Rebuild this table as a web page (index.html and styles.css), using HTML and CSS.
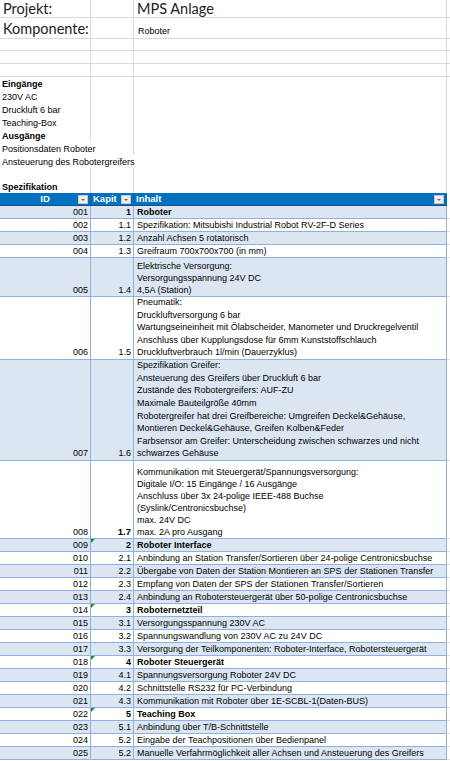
FILE: index.html
```html
<!DOCTYPE html>
<html lang="de">
<head>
<meta charset="utf-8">
<link rel="stylesheet" href="styles.css">
<title>Roboter</title>
</head>
<body>
<div class="sheet">
  <div class="row grid h18"><div class="cell big">Projekt:</div><div class="cell"></div><div class="cell big">MPS Anlage</div><div class="cell last"></div></div>
  <div class="row grid h21"><div class="cell big">Komponente:</div><div class="cell"></div><div class="cell komp">Roboter</div><div class="cell last"></div></div>
  <div class="row grid h12"><div class="cell"></div><div class="cell"></div><div class="cell"></div><div class="cell last"></div></div>
  <div class="row grid"><div class="cell"></div><div class="cell"></div><div class="cell"></div><div class="cell last"></div></div>
  <div class="row grid"><div class="cell"></div><div class="cell"></div><div class="cell"></div><div class="cell last"></div></div>

  <div class="row plain"><div class="cell b">Eingänge</div><div class="cell"></div><div class="cell"></div><div class="cell last"></div></div>
  <div class="row plain"><div class="cell">230V AC</div><div class="cell"></div><div class="cell"></div><div class="cell last"></div></div>
  <div class="row plain"><div class="cell">Druckluft 6 bar</div><div class="cell"></div><div class="cell"></div><div class="cell last"></div></div>
  <div class="row plain"><div class="cell">Teaching-Box</div><div class="cell"></div><div class="cell"></div><div class="cell last"></div></div>
  <div class="row plain"><div class="cell b">Ausgänge</div><div class="cell"></div><div class="cell"></div><div class="cell last"></div></div>
  <div class="row plain"><div class="cell span2">Positionsdaten Roboter</div><div class="cell"></div><div class="cell last"></div></div>
  <div class="row plain"><div class="cell span3">Ansteuerung des Robotergreifers</div><div class="cell last"></div></div>
  <div class="row plain"><div class="cell"></div><div class="cell"></div><div class="cell"></div><div class="cell last"></div></div>
  <div class="row plain h12"><div class="cell b">Spezifikation</div><div class="cell"></div><div class="cell"></div><div class="cell last"></div></div>

  <div class="row hdr">
    <div class="cell hc center">ID<span class="dd"></span></div>
    <div class="cell hc">Kapit<span class="dd"></span></div>
    <div class="cell hc">Inhalt<span class="dd"></span></div>
    <div class="cell last"></div>
  </div>

  <div class="row t band"><div class="cell num">001</div><div class="cell num b">1</div><div class="cell b">Roboter</div><div class="cell last"></div></div>
  <div class="row t"><div class="cell num">002</div><div class="cell num">1.1</div><div class="cell">Spezifikation: Mitsubishi Industrial Robot RV-2F-D Series</div><div class="cell last"></div></div>
  <div class="row t band"><div class="cell num">003</div><div class="cell num">1.2</div><div class="cell">Anzahl Achsen 5 rotatorisch</div><div class="cell last"></div></div>
  <div class="row t"><div class="cell num">004</div><div class="cell num">1.3</div><div class="cell">Greifraum 700x700x700 (in mm)</div><div class="cell last"></div></div>
  <div class="row t band h39"><div class="cell num">005</div><div class="cell num">1.4</div><div class="cell">Elektrische Versorgung:<br>Versorgungsspannung 24V DC<br>4,5A (Station)</div><div class="cell last"></div></div>
  <div class="row t h63 tight"><div class="cell num">006</div><div class="cell num">1.5</div><div class="cell">Pneumatik:<br>Druckluftversorgung 6 bar<br>Wartungseineinheit mit Ölabscheider, Manometer und Druckregelventil<br>Anschluss über Kupplungsdose für 6mm Kunststoffschlauch<br>Druckluftverbrauch 1l/min (Dauerzyklus)</div><div class="cell last"></div></div>
  <div class="row t band h101 tight"><div class="cell num">007</div><div class="cell num">1.6</div><div class="cell">Spezifikation Greifer:<br>Ansteuerung des Greifers über Druckluft 6 bar<br>Zustände des Robotergreifers: AUF-ZU<br>Maximale Bauteilgröße 40mm<br>Robotergreifer hat drei Greifbereiche: Umgreifen Deckel&amp;Gehäuse,<br>Montieren Deckel&amp;Gehäuse, Greifen Kolben&amp;Feder<br>Farbsensor am Greifer: Unterscheidung zwischen schwarzes und nicht<br>schwarzes Gehäuse</div><div class="cell last"></div></div>
  <div class="row t h78"><div class="cell num">008</div><div class="cell num b big7">1.7</div><div class="cell">Kommunikation mit Steuergerät/Spannungsversorgung:<br>Digitale I/O: 15 Eingänge / 16 Ausgänge<br>Anschluss über 3x 24-polige IEEE-488 Buchse<br>(Syslink/Centronicsbuchse)<br>max. 24V DC<br>max. 2A pro Ausgang</div><div class="cell last"></div></div>
  <div class="row t band"><div class="cell num">009</div><div class="cell num b mark">2</div><div class="cell b">Roboter Interface</div><div class="cell last"></div></div>
  <div class="row t"><div class="cell num">010</div><div class="cell num">2.1</div><div class="cell">Anbindung an Station Transfer/Sortieren über 24-polige Centronicsbuchse</div><div class="cell last"></div></div>
  <div class="row t band"><div class="cell num">011</div><div class="cell num">2.2</div><div class="cell">Übergabe von Daten der Station Montieren an SPS der Stationen Transfer</div><div class="cell last"></div></div>
  <div class="row t"><div class="cell num">012</div><div class="cell num">2.3</div><div class="cell">Empfang von Daten der SPS der Stationen Transfer/Sortieren</div><div class="cell last"></div></div>
  <div class="row t band"><div class="cell num">013</div><div class="cell num">2.4</div><div class="cell">Anbindung an Robotersteuergerät über 50-polige Centronicsbuchse</div><div class="cell last"></div></div>
  <div class="row t"><div class="cell num">014</div><div class="cell num b mark">3</div><div class="cell b">Roboternetzteil</div><div class="cell last"></div></div>
  <div class="row t band"><div class="cell num">015</div><div class="cell num">3.1</div><div class="cell">Versorgungsspannung 230V AC</div><div class="cell last"></div></div>
  <div class="row t"><div class="cell num">016</div><div class="cell num">3.2</div><div class="cell">Spannungswandlung von 230V AC zu 24V DC</div><div class="cell last"></div></div>
  <div class="row t band"><div class="cell num">017</div><div class="cell num">3.3</div><div class="cell">Versorgung der Teilkomponenten: Roboter-Interface, Robotersteuergerät</div><div class="cell last"></div></div>
  <div class="row t"><div class="cell num">018</div><div class="cell num b mark">4</div><div class="cell b">Roboter Steuergerät</div><div class="cell last"></div></div>
  <div class="row t band"><div class="cell num">019</div><div class="cell num">4.1</div><div class="cell">Spannungsversorgung Roboter 24V DC</div><div class="cell last"></div></div>
  <div class="row t"><div class="cell num">020</div><div class="cell num">4.2</div><div class="cell">Schnittstelle RS232 für PC-Verbindung</div><div class="cell last"></div></div>
  <div class="row t band"><div class="cell num">021</div><div class="cell num">4.3</div><div class="cell">Kommunikation mit Roboter über 1E-SCBL-1(Daten-BUS)</div><div class="cell last"></div></div>
  <div class="row t"><div class="cell num">022</div><div class="cell num b mark">5</div><div class="cell b">Teaching Box</div><div class="cell last"></div></div>
  <div class="row t band"><div class="cell num">023</div><div class="cell num">5.1</div><div class="cell">Anbindung über T/B-Schnittstelle</div><div class="cell last"></div></div>
  <div class="row t"><div class="cell num">024</div><div class="cell num">5.2</div><div class="cell">Eingabe der Teachpositionen über Bedienpanel</div><div class="cell last"></div></div>
  <div class="row t band"><div class="cell num">025</div><div class="cell num">5.2</div><div class="cell">Manuelle Verfahrmöglichkeit aller Achsen und Ansteuerung des Greifers</div><div class="cell last"></div></div>
</div>
</body>
</html>
```
FILE: styles.css
```css
* { box-sizing: border-box; margin: 0; padding: 0; }
html, body { background: #fff; }
body {
  width: 450px;
  height: 761px;
  overflow: hidden;
  font-family: "Liberation Sans", Arial, sans-serif;
  font-size: 9px;
  color: #000;
}
.sheet { display: flex; flex-direction: column; }
.row {
  display: grid;
  grid-template-columns: 91px 43px 313px 3px;
  height: 13px;
}
.h12 { height: 12px; }
.h18 { height: 18px; }
.h21 { height: 21px; }
.h39 { height: 39px; }
.h63 { height: 63px; }
.h78 { height: 78px; }
.h101 { height: 101px; }

.cell {
  border-right: 1px solid #dadada;
  overflow: hidden;
  white-space: nowrap;
  display: flex;
  flex-direction: column;
  justify-content: flex-end;
  padding: 0 2px;
  line-height: 12px;
  position: relative;
}
.cell.last { border-right: none; }
.span2 { grid-column: span 2; }
.span3 { grid-column: span 3; }
.grid .cell { border-bottom: 1px solid #dadada; }
.big {
  font-family: Lato, "Liberation Sans", sans-serif;
  font-size: 14.5px;
  line-height: 17px;
  padding-left: 3px;
  color: #222;
  overflow: visible;
  z-index: 1;
}
.h18 .big { justify-content: center; }
.h21 .big { line-height: 19px; }
.komp { padding-left: 4px; padding-bottom: 1px; }
.b { font-weight: bold; }

.hdr { background: #0070c0; color: #fff; font-weight: bold; font-size: 9.5px; }
.hdr .cell { border-right: 1px solid #0b5fa0; border-bottom: 1px solid #1a4f86; }
.hdr .cell.last { background: #fff; border: none; }
.hc { flex-direction: row; align-items: center; justify-content: flex-start; }
.hc.center { justify-content: center; }
.dd {
  position: absolute;
  right: 2px;
  top: 2px;
  width: 10px;
  height: 9px;
  background: #efefef;
  border: 1px solid #c8c8c8;
}
.dd::after {
  content: "";
  position: absolute;
  left: 2px;
  top: 3px;
  border-left: 2.5px solid transparent;
  border-right: 2.5px solid transparent;
  border-top: 2.5px solid #666;
}

.t .cell { border-right: 1px solid #8eb1de; border-bottom: 1px solid #8eb1de; }
.t .cell.last { border-right: none; border-bottom: 1px solid #e0e0e0; background: #fff; }
.t.band .cell { background: #dce6f2; }
.t.band .cell.last { background: #fff; }
.t .cell.num { text-align: right; align-items: flex-end; }
.t .cell:nth-child(3) { padding-left: 3px; }
.tight .cell { line-height: 12.6px; }
.big7 { font-size: 9.5px; }
.mark::before {
  content: "";
  position: absolute;
  left: 0;
  top: 0;
  border-top: 4px solid #1e8a1e;
  border-right: 4px solid transparent;
}
```
